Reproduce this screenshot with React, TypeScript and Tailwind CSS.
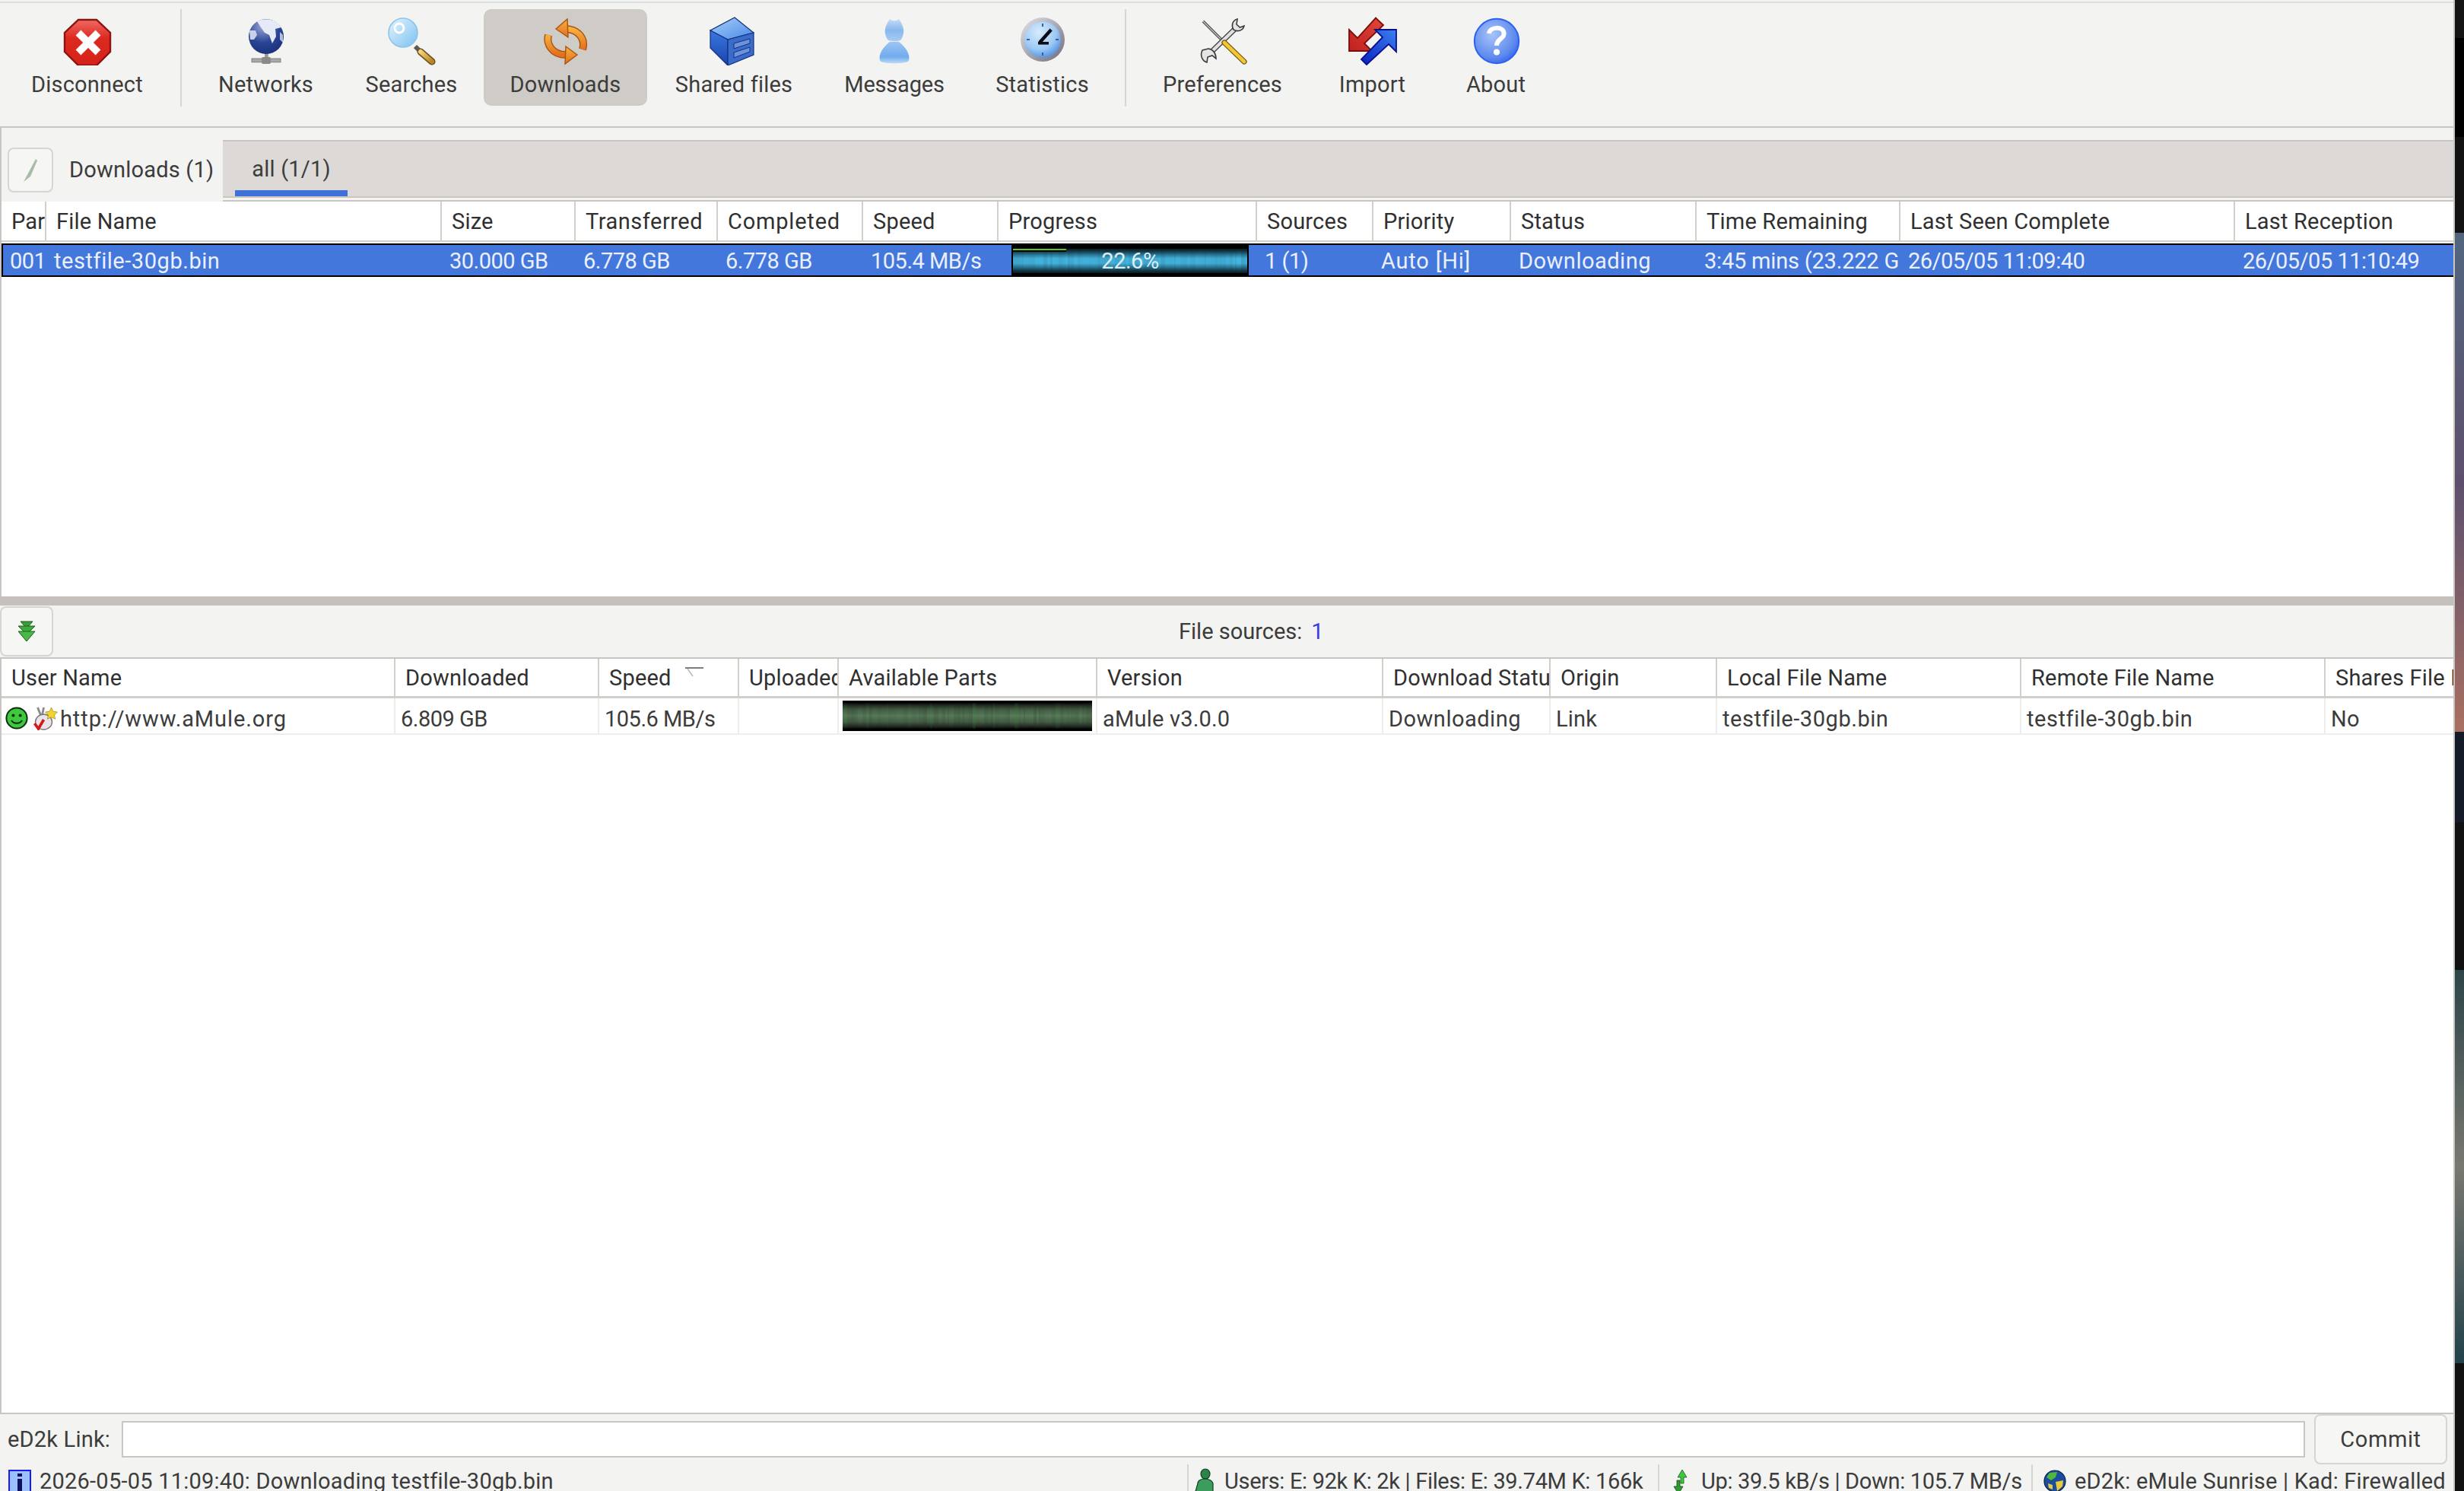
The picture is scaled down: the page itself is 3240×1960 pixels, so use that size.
import React from "react";

const stripes = (n: number, seed: number, scale: number) => {
  const out: { x: number; w: number; o: number }[] = [];
  let s = seed;
  let x = 0;
  for (let i = 0; i < n; i++) {
    s = (s * 9301 + 49297) % 233280;
    const w = 2 + (s % 5);
    s = (s * 9301 + 49297) % 233280;
    out.push({ x, w, o: ((s % 100) / 100) * scale });
    x += w;
  }
  return out;
};

const DisconnectIcon = () => (
  <svg width="64" height="64" viewBox="0 0 32 32">
    <defs>
      <linearGradient id="dc" x1="0" y1="0" x2="0" y2="1">
        <stop offset="0" stopColor="#ef6a62" />
        <stop offset="0.4" stopColor="#dd2a20" />
        <stop offset="1" stopColor="#d5231a" />
      </linearGradient>
    </defs>
    <polygon points="10,2 22,2 31,10.5 31,23 22,32 10,32 1,23 1,10.5" fill="url(#dc)" stroke="#8a1410" strokeWidth="1.2" />
    <path d="M10 10.5 L23 23.5 M23 10.5 L10 23.5" stroke="#fff" strokeWidth="4.8" />
  </svg>
);

const GlobeIcon = () => (
  <svg width="64" height="64" viewBox="0 0 32 32">
    <defs>
      <radialGradient id="gl" cx="0.4" cy="0.2" r="0.95">
        <stop offset="0" stopColor="#9aa8d8" />
        <stop offset="0.5" stopColor="#2a4596" />
        <stop offset="1" stopColor="#142a70" />
      </radialGradient>
    </defs>
    <rect x="15" y="24" width="2.4" height="5" fill="#9a9a9a" />
    <rect x="6.5" y="27.5" width="19" height="2.4" fill="#a8a8a8" stroke="#707070" strokeWidth="0.4" />
    <rect x="13" y="26.5" width="6" height="4.5" rx="1" fill="#8a8a8a" />
    <circle cx="16" cy="13" r="11.5" fill="url(#gl)" />
    <path d="M10 3 C14 1 21 1.4 24 4.5 L26 7 L22 8 L22.5 13 L20 17.5 L18 12 L15 10.5 L12.5 7 Z" fill="#e6e9f6" />
    <path d="M5 9 L9 9 L10 12 L8 15 L5.5 15 Z" fill="#c8d0ea" />
    <path d="M25 10 L27 12 L27 17 L25 15 Z" fill="#b4bede" />
  </svg>
);

const SearchIcon = () => (
  <svg width="64" height="64" viewBox="0 0 32 32">
    <defs>
      <linearGradient id="ln" x1="0" y1="0" x2="1" y2="1">
        <stop offset="0" stopColor="#e4f4fe" />
        <stop offset="1" stopColor="#7cc0f0" />
      </linearGradient>
      <linearGradient id="hd" x1="0" y1="0" x2="1" y2="1">
        <stop offset="0" stopColor="#f4d27a" />
        <stop offset="1" stopColor="#b88420" />
      </linearGradient>
    </defs>
    <path d="M18.5 19.5 L21 22" stroke="#5a5a5a" strokeWidth="3" />
    <path d="M22 23 L29.5 29.5" stroke="#6a5424" strokeWidth="4.6" strokeLinecap="round" />
    <path d="M22 23 L29.5 29.5" stroke="url(#hd)" strokeWidth="3" strokeLinecap="round" />
    <circle cx="10.5" cy="10.5" r="9.5" fill="url(#ln)" stroke="#8cc4e8" strokeWidth="0.8" />
    <circle cx="8" cy="7.5" r="3" fill="none" stroke="#ffffff" strokeWidth="1.4" />
  </svg>
);

const DownloadsIcon = () => (
  <svg width="64" height="64" viewBox="0 0 32 32">
    <defs>
      <linearGradient id="or" x1="0" y1="0" x2="0" y2="1">
        <stop offset="0" stopColor="#f8b040" />
        <stop offset="1" stopColor="#e2701c" />
      </linearGradient>
    </defs>
    <path d="M27 21.5 C29 15 25 8.5 16 8" fill="none" stroke="#a85210" strokeWidth="5" />
    <path d="M27 21.5 C29 15 25 8.5 16 8" fill="none" stroke="url(#or)" strokeWidth="3.6" />
    <polygon points="9.5,8 17,1.5 17.5,13.5" fill="url(#or)" stroke="#a85210" strokeWidth="0.7" />
    <path d="M4.5 12 C3 18 7 25 16 25" fill="none" stroke="#a85210" strokeWidth="5" />
    <path d="M4.5 12 C3 18 7 25 16 25" fill="none" stroke="url(#or)" strokeWidth="3.6" />
    <polygon points="23.5,25 16,19.5 15.5,31" fill="url(#or)" stroke="#a85210" strokeWidth="0.7" />
  </svg>
);

const SharedIcon = () => (
  <svg width="64" height="64" viewBox="0 0 32 32">
    <defs>
      <linearGradient id="sh" x1="0" y1="0" x2="1" y2="1">
        <stop offset="0" stopColor="#a8d0f8" />
        <stop offset="1" stopColor="#4a88e8" />
      </linearGradient>
      <linearGradient id="sl" x1="0" y1="0" x2="0" y2="1">
        <stop offset="0" stopColor="#3a78e0" />
        <stop offset="1" stopColor="#1a42b0" />
      </linearGradient>
    </defs>
    <polygon points="16.5,0.5 29,10.5 12,15 0.5,9" fill="url(#sh)" stroke="#14307c" strokeWidth="0.6" />
    <polygon points="0.5,9 12,15 12,32 0.5,20.5" fill="url(#sl)" stroke="#14307c" strokeWidth="0.6" />
    <polygon points="12,15 29,10.5 29,25 12,32" fill="#3a6ccc" stroke="#14307c" strokeWidth="0.6" />
    <polygon points="16,17.5 26.5,14.5 26.5,17.5 16,21" fill="#6e92da" stroke="#14307c" strokeWidth="0.5" />
    <polygon points="16,23.5 26.5,20 26.5,23 16,27" fill="#6e92da" stroke="#14307c" strokeWidth="0.5" />
  </svg>
);

const MessagesIcon = () => (
  <svg width="64" height="64" viewBox="0 0 32 32">
    <defs>
      <linearGradient id="mh" x1="0" y1="0" x2="0" y2="1">
        <stop offset="0" stopColor="#c4dcf6" />
        <stop offset="0.5" stopColor="#88b8ee" />
        <stop offset="1" stopColor="#a8ccf2" />
      </linearGradient>
      <linearGradient id="mb" x1="0" y1="0" x2="0" y2="1">
        <stop offset="0" stopColor="#9cc4f2" />
        <stop offset="0.7" stopColor="#70acee" />
        <stop offset="1" stopColor="#bcdaf8" />
      </linearGradient>
    </defs>
    <path d="M13 1.5 C14.5 3 17.5 3 19 1.5 C22 6 23.5 10 20.5 15 C19.5 16.5 12.5 16.5 11.5 15 C8.5 10 10 6 13 1.5 Z" fill="url(#mh)" />
    <path d="M13 16.5 L19 16.5 C25 21 27 27 25 29.5 C21 31 11 31 7 29.5 C5 27 7 21 13 16.5 Z" fill="url(#mb)" />
  </svg>
);

const ClockIcon = () => (
  <svg width="64" height="64" viewBox="0 0 32 32">
    <defs>
      <radialGradient id="cf" cx="0.4" cy="0.3" r="0.8">
        <stop offset="0" stopColor="#d8ecfc" />
        <stop offset="0.6" stopColor="#9cc8f4" />
        <stop offset="1" stopColor="#3c86e0" />
      </radialGradient>
      <linearGradient id="cr" x1="0" y1="0" x2="1" y2="1">
        <stop offset="0" stopColor="#e4e4ea" />
        <stop offset="1" stopColor="#6c6c7c" />
      </linearGradient>
    </defs>
    <circle cx="16" cy="15" r="14.5" fill="url(#cr)" />
    <circle cx="16" cy="15" r="11.8" fill="url(#cf)" />
    <path d="M16 4.5 V6.5 M16 23.5 V25.5 M5.5 15 H7.5 M24.5 15 H26.5" stroke="#3c5ca0" strokeWidth="1" />
    <path d="M14 17 L21.6 8.5" stroke="#0c0c14" strokeWidth="2.2" />
    <path d="M13 17.4 H20" stroke="#0c0c14" strokeWidth="1.8" />
  </svg>
);

const PrefsIcon = () => (
  <svg width="64" height="64" viewBox="0 0 32 32">
    <path d="M3 3 L16 16" stroke="#3c3c3c" strokeWidth="1.8" />
    <path d="M3 3 L16 16" stroke="#c8c8c8" strokeWidth="0.7" />
    <path d="M24.5 7.5 L7.5 24" stroke="#3c3c3c" strokeWidth="3.4" />
    <path d="M24.5 7.5 L7.5 24" stroke="#e0e0e0" strokeWidth="2.2" />
    <path d="M25.5 1.5 C22 2.5 21.5 6 23 8.5 C25.5 10 29 9.5 30 6 L27.2 7 L25 5 Z" fill="#e4e4e4" stroke="#3c3c3c" strokeWidth="0.8" />
    <path d="M2.5 22 C1 25 2 29 5.5 30 L6 26.5 L9 25.5 L11.5 27.5 C11.5 24 9.5 21.5 6.5 21 Z" fill="#e4e4e4" stroke="#3c3c3c" strokeWidth="0.8" />
    <path d="M17 17 L30 29.5" stroke="#6c5414" strokeWidth="3.6" strokeLinecap="round" />
    <path d="M17 17 L30 29.5" stroke="#f4c630" strokeWidth="2.4" strokeLinecap="round" />
  </svg>
);

const ImportIcon = () => (
  <svg width="64" height="64" viewBox="0 0 32 32">
    <defs>
      <linearGradient id="ir" x1="1" y1="0" x2="0" y2="1">
        <stop offset="0" stopColor="#e04838" />
        <stop offset="1" stopColor="#c02020" />
      </linearGradient>
      <linearGradient id="ib" x1="1" y1="0" x2="0" y2="1">
        <stop offset="0" stopColor="#3c80f0" />
        <stop offset="1" stopColor="#0820c0" />
      </linearGradient>
    </defs>
    <polygon points="0.5,22.5 0.5,8.5 6,14 18,0.8 23,5.5 10.5,17.5 15.5,22.5" fill="url(#ir)" stroke="#7c0c0c" strokeWidth="0.9" />
    <polygon points="31.5,8.5 31.5,23 26.5,18 12,31.5 8.5,28 22.5,13.5 17.5,8.5" fill="url(#ib)" stroke="#08108c" strokeWidth="0.9" />
  </svg>
);

const AboutIcon = () => (
  <svg width="64" height="64" viewBox="0 0 32 32">
    <defs>
      <radialGradient id="ab" cx="0.4" cy="0.35" r="0.75">
        <stop offset="0" stopColor="#a8c4f8" />
        <stop offset="0.7" stopColor="#5e8aec" />
        <stop offset="1" stopColor="#2a5cf0" />
      </radialGradient>
    </defs>
    <circle cx="16.5" cy="16" r="14.6" fill="url(#ab)" stroke="#2c60f4" strokeWidth="1" />
    <path d="M11.5 11 C12 6.5 21 6 21.3 11 C21.5 14.5 16.5 14.5 16.5 19" fill="none" stroke="#fff" strokeWidth="3" />
    <circle cx="16.5" cy="23.3" r="2" fill="#fff" />
  </svg>
);

const Smiley = () => (
  <svg width="30" height="30" viewBox="0 0 15 15" className="shrink-0 mt-[6px]">
    <circle cx="7.5" cy="7.5" r="6.8" fill="#3ec83e" stroke="#0c2c0c" strokeWidth="1" />
    <circle cx="5.2" cy="5.8" r="1" fill="#0c2c0c" />
    <circle cx="9.8" cy="5.8" r="1" fill="#0c2c0c" />
    <path d="M4 9 C5.5 11.5 9.5 11.5 11 9" fill="none" stroke="#0c2c0c" strokeWidth="1" />
  </svg>
);

const MuleBadge = () => (
  <svg width="33" height="32" viewBox="0 0 16 16" className="shrink-0 ml-[6px] mt-[6px]">
    <path d="M3 1 L5 6 M7 1 L6 6" stroke="#8a8a8a" strokeWidth="1.4" />
    <ellipse cx="7" cy="10.5" rx="5.5" ry="5" fill="#e8e4e8" stroke="#7a7478" strokeWidth="0.7" />
    <polygon points="12,1 13.2,3.6 16,4 14,6 14.6,8.6 12,7.4 9.4,8.6 10,6 8,4 10.8,3.6" fill="#f4d428" stroke="#8a7410" strokeWidth="0.3" />
    <path d="M1 11.5 L3.5 15 L7 9" fill="none" stroke="#d41818" strokeWidth="1.8" />
  </svg>
);

const TripleDown = () => (
  <svg width="30" height="28" viewBox="0 0 15 14">
    <path d="M3.5 0.5 H11.5 L7.5 5 Z" fill="#3c9c3c" stroke="#1c5c1c" strokeWidth="0.5" />
    <path d="M2 3.5 H13 L7.5 9 Z" fill="#3cac3c" stroke="#1c5c1c" strokeWidth="0.5" />
    <path d="M2 7 H13 L7.5 13.5 Z" fill="#48b848" stroke="#1c5c1c" strokeWidth="0.5" />
  </svg>
);

const InfoIcon = () => (
  <svg width="30" height="30" viewBox="0 0 15 15" className="shrink-0">
    <rect x="0.5" y="0.5" width="14" height="14" fill="#9cc0fc" stroke="#1c1cf0" strokeWidth="1" />
    <rect x="6" y="2.5" width="3" height="2" fill="#101060" />
    <rect x="6" y="6" width="3" height="8" fill="#101060" />
  </svg>
);

const UsersIcon = () => (
  <svg width="30" height="34" viewBox="0 0 15 17" className="shrink-0">
    <ellipse cx="8" cy="3.8" rx="3" ry="3.3" fill="#2c8448" stroke="#143c20" strokeWidth="0.6" />
    <path d="M3 10 C3 6 12 6 13 10 L13 17 H1 Z" fill="#3c9c5c" stroke="#143c20" strokeWidth="0.6" />
  </svg>
);

const UpDownIcon = () => (
  <svg width="20" height="34" viewBox="0 0 10 17" className="shrink-0">
    <path d="M6 1 L9 6 H7 V10 H5 V6 H3 Z" fill="#3cc83c" stroke="#1c5c1c" strokeWidth="0.4" />
    <path d="M3.5 17 L0.5 12 H2.5 V8 H4.5 V12 H6.5 Z" fill="#2c9c2c" stroke="#1c3c1c" strokeWidth="0.4" />
  </svg>
);

const NetIcon = () => (
  <svg width="30" height="34" viewBox="0 0 15 17" className="shrink-0">
    <circle cx="7.5" cy="8.5" r="7" fill="#1c4c9c" stroke="#0c1c4c" strokeWidth="0.6" />
    <path d="M4 3 L9 2.5 L8 6 L5 8 L2 6 Z" fill="#4cb83c" />
    <path d="M8 9 L13 8 L12.5 12 L9 15 Z" fill="#e8c83c" />
    <path d="M3 10 L6 11 L6 14 L3.5 13 Z" fill="#e8c83c" />
  </svg>
);

const ProgressBar = () => (
  <div className="relative w-[312px] h-[43px] bg-black shrink-0">
    <svg width="308" height="32" viewBox="0 0 308 32" className="absolute left-[2px] top-[6px]">
      <defs>
        <linearGradient id="pg" x1="0" y1="0" x2="0" y2="1">
          <stop offset="0" stopColor="#0a1c24" />
          <stop offset="0.1" stopColor="#143844" />
          <stop offset="0.25" stopColor="#2c7c9c" />
          <stop offset="0.4" stopColor="#45b4de" />
          <stop offset="0.6" stopColor="#45b4de" />
          <stop offset="0.75" stopColor="#2c7c9c" />
          <stop offset="0.9" stopColor="#143844" />
          <stop offset="1" stopColor="#0a1c24" />
        </linearGradient>
      </defs>
      <rect width="308" height="32" fill="url(#pg)" />
      {stripes(90, 11, 0.12).map((s, i) => (
        <rect key={i} x={s.x} y="0" width={s.w} height="32" fill="#06222e" opacity={s.o} />
      ))}
      <rect width="70" height="4" fill="#000" />
      <rect width="70" height="2" fill="#58c82c" />
    </svg>
    <span className="absolute inset-0 flex items-center justify-center text-[#dcecf4] tracking-[-0.5px]">22.6%</span>
  </div>
);

const PartsBar = () => (
  <svg width="328" height="40" viewBox="0 0 328 40" className="shrink-0">
    <defs>
      <linearGradient id="pa" x1="0" y1="0" x2="0" y2="1">
        <stop offset="0" stopColor="#000" />
        <stop offset="0.07" stopColor="#000" />
        <stop offset="0.15" stopColor="#222a22" />
        <stop offset="0.3" stopColor="#445f46" />
        <stop offset="0.5" stopColor="#5a7a5a" />
        <stop offset="0.7" stopColor="#445f46" />
        <stop offset="0.85" stopColor="#222a22" />
        <stop offset="0.93" stopColor="#000" />
        <stop offset="1" stopColor="#000" />
      </linearGradient>
    </defs>
    <rect width="328" height="40" fill="url(#pa)" />
    {stripes(90, 37, 0.18).map((s, i) => (
      <rect key={i} x={s.x} y="3" width={s.w} height="34" fill={i % 7 === 0 ? "#2c8c2c" : "#1a2a1a"} opacity={s.o} />
    ))}
  </svg>
);

const tools = [
  { label: "Disconnect", w: "w-[213px]", icon: <DisconnectIcon /> },
  { sep: "ml-[14px] mr-[12px]" },
  { label: "Networks", w: "w-[193px]", icon: <GlobeIcon /> },
  { label: "Searches", w: "w-[186px]", icon: <SearchIcon /> },
  { label: "Downloads", w: "w-[215px]", icon: <DownloadsIcon />, active: true },
  { label: "Shared files", w: "w-[224px]", icon: <SharedIcon /> },
  { label: "Messages", w: "w-[194px]", c: "tracking-[-0.2px]", icon: <MessagesIcon /> },
  { label: "Statistics", w: "w-[191px]", icon: <ClockIcon /> },
  { sep: "ml-[11px] mr-[11px]" },
  { label: "Preferences", w: "w-[227px]", icon: <PrefsIcon /> },
  { label: "Import", w: "w-[163px]", icon: <ImportIcon /> },
  { label: "About", w: "w-[158px]", icon: <AboutIcon /> },
];

const topCols = [
  { t: "Par", w: "w-[59px]" },
  { t: "File Name", w: "w-[520px]" },
  { t: "Size", w: "w-[176px]" },
  { t: "Transferred", w: "w-[187px]", c: "tracking-[0.5px]" },
  { t: "Completed", w: "w-[191px]", c: "tracking-[0.8px]" },
  { t: "Speed", w: "w-[178px]" },
  { t: "Progress", w: "w-[340px]" },
  { t: "Sources", w: "w-[153px]" },
  { t: "Priority", w: "w-[181px]" },
  { t: "Status", w: "w-[244px]" },
  { t: "Time Remaining", w: "w-[268px]" },
  { t: "Last Seen Complete", w: "w-[440px]" },
  { t: "Last Reception", w: "flex-1" },
];

const topRow = [
  { t: "001", w: "w-[57px]", c: "pl-[9px] tracking-[-0.5px]" },
  { t: "testfile-30gb.bin", w: "w-[520px]", c: "pl-[10px] tracking-[0.55px]" },
  { t: "30.000 GB", w: "w-[176px]", c: "pl-[10px] tracking-[-0.5px]" },
  { t: "6.778 GB", w: "w-[187px]", c: "pl-[10px] tracking-[-0.5px]" },
  { t: "6.778 GB", w: "w-[191px]", c: "pl-[10px] tracking-[-0.5px]" },
  { t: "105.4 MB/s", w: "w-[178px]", c: "pl-[10px] tracking-[-0.5px]" },
  { t: "", w: "w-[340px]", c: "pl-[17px]", bar: true },
  { t: "1 (1)", w: "w-[153px]", c: "pl-[10px] tracking-[-0.5px]" },
  { t: "Auto [Hi]", w: "w-[181px]", c: "pl-[10px] tracking-[0.8px]" },
  { t: "Downloading", w: "w-[244px]", c: "pl-[10px] tracking-[0.5px]" },
  { t: "3:45 mins (23.222 G", w: "w-[268px]", c: "pl-[10px] tracking-[-0.2px]" },
  { t: "26/05/05 11:09:40", w: "w-[440px]", c: "pl-[10px] tracking-[-0.5px]" },
  { t: "26/05/05 11:10:49", w: "flex-1", c: "pl-[10px] tracking-[-0.5px]" },
];

const botCols = [
  { t: "User Name", w: "w-[518px]" },
  { t: "Downloaded", w: "w-[268px]" },
  { t: "Speed", w: "w-[184px]", sort: true },
  { t: "Uploaded", w: "w-[131px]" },
  { t: "Available Parts", w: "w-[340px]" },
  { t: "Version", w: "w-[376px]" },
  { t: "Download Status", w: "w-[220px]" },
  { t: "Origin", w: "w-[219px]" },
  { t: "Local File Name", w: "w-[400px]" },
  { t: "Remote File Name", w: "w-[400px]" },
  { t: "Shares File List", w: "flex-1" },
];

const botRow: { t: string; w: string; kind?: string; c?: string }[] = [
  { t: "http://www.aMule.org", w: "w-[518px]", kind: "user", c: "tracking-[0.9px]" },
  { t: "6.809 GB", w: "w-[268px]", c: "tracking-[-0.5px]" },
  { t: "105.6 MB/s", w: "w-[184px]", c: "tracking-[-0.5px]" },
  { t: "", w: "w-[131px]" },
  { t: "", w: "w-[340px]", kind: "parts" },
  { t: "aMule v3.0.0", w: "w-[376px]" },
  { t: "Downloading", w: "w-[220px]", c: "tracking-[0.5px]" },
  { t: "Link", w: "w-[219px]" },
  { t: "testfile-30gb.bin", w: "w-[400px]", c: "tracking-[0.55px]" },
  { t: "testfile-30gb.bin", w: "w-[400px]", c: "tracking-[0.55px]" },
  { t: "No", w: "flex-1" },
];

export default function App() {
  return (
    <div className="flex w-[3240px] h-[1960px] overflow-hidden font-['Roboto',sans-serif] text-[29px] leading-[36px] tracking-[0.2px] text-[#3c3c3c] whitespace-nowrap">
      <div className="flex flex-col w-[3228px] h-full bg-[#f3f3f1] border-r-2 border-[#c9c5c0]">
        <div className="h-[4px] shrink-0 border-b-2 border-[#dcdcdc]" />

        <div className="h-[164px] shrink-0 flex gap-[2px] pl-[8px] pt-[8px] border-b-2 border-[#c9c5c0]">
          {tools.map((it, i) =>
            it.sep ? (
              <div key={i} className={`w-[2px] h-[128px] ${it.sep} bg-[#d8d6d2]`} />
            ) : (
              <div
                key={i}
                className={`${it.w} h-[127px] flex flex-col items-center pt-[10px] rounded-[10px] ${
                  it.active ? "bg-[#cfcbc6]" : ""
                }`}
              >
                <div className="w-[64px] h-[64px]">{it.icon}</div>
                <div className={`mt-[7px] ${it.c ?? ""}`}>{it.label}</div>
              </div>
            )
          )}
        </div>

        <div className="h-[97px] shrink-0 flex border-l-2 border-[#c9c5c0]">
          <div className="w-[291px] shrink-0 flex items-start pl-[8px] pt-[26px] gap-[21px]">
            <div className="w-[60px] h-[59px] rounded-[8px] border-2 border-[#d8d5d1] bg-[#f6f6f4] flex items-center justify-center">
              <svg width="20" height="32" viewBox="0 0 20 32">
                <path d="M1 31 L17 1 L19 3 L10 24 Z" fill="#a9bca8" />
              </svg>
            </div>
            <div className="pt-[11px]">Downloads (1)</div>
          </div>
          <div className="flex-1 flex flex-col mt-[16px]">
            <div className="h-[76px] bg-[#dcd9d6] border-t-2 border-b-2 border-[#c9c5c0] pl-[16px]">
              <div className="w-[148px] h-[72px] flex justify-center pt-[18px] border-b-8 border-[#3f72d8]">all (1/1)</div>
            </div>
            <div className="flex-1 bg-[#f3f3f1] border-b-2 border-[#c9c5c0]" />
          </div>
        </div>

        <div className="h-[519px] shrink-0 flex flex-col bg-white border-l-2 border-[#c9c5c0]">
          <div className="h-[53px] shrink-0 flex border-b-2 border-[#d3d0cc] text-[#303030]">
            {topCols.map((c, i) => (
              <div key={i} className={`${c.w} ${c.c ?? ""} shrink-0 overflow-hidden pl-[13px] flex items-center border-r-2 border-[#d3d0cc] last:border-r-0`}>
                {c.t}
              </div>
            ))}
          </div>
          <div className="h-[44px] mt-[2px] shrink-0 flex bg-[#4477dc] border-y-2 border-l-2 border-black text-[#eaf0fb]">
            {topRow.map((c, i) => (
              <div key={i} className={`${c.w} shrink-0 overflow-hidden ${c.c} flex items-center pt-[1px]`}>
                {c.bar ? <ProgressBar /> : c.t}
              </div>
            ))}
          </div>
        </div>

        <div className="h-[12px] shrink-0 bg-[#c5c0bb]" />

        <div className="h-[70px] shrink-0 flex items-center border-b-2 border-[#c9c5c0]">
          <div className="w-[70px] h-[66px] shrink-0 rounded-[8px] border-2 border-[#d8d5d1] bg-[#f6f6f4] flex items-center justify-center">
            <TripleDown />
          </div>
          <div className="ml-[1480px] flex gap-[12px] tracking-[0px]">
            <span>File sources:</span>
            <span className="text-[#3c3ce0]">1</span>
          </div>
        </div>

        <div className="flex-1 min-h-0 flex flex-col bg-white border-l-2 border-[#c9c5c0]">
          <div className="h-[52px] shrink-0 flex border-b-[3px] border-[#d3d0cc] text-[#303030]">
            {botCols.map((c, i) => (
              <div key={i} className={`${c.w} shrink-0 overflow-hidden pl-[13px] flex items-center border-r-2 border-[#d3d0cc] last:border-r-0 gap-[18px]`}>
                <span>{c.t}</span>
                {c.sort && (
                  <svg width="24" height="14" viewBox="0 0 24 14" className="shrink-0 -mt-[14px]">
                    <path d="M0 1 H24" stroke="#7c7c7c" strokeWidth="2" />
                    <path d="M3 2 L10 12" stroke="#b8b8b8" strokeWidth="1.5" />
                  </svg>
                )}
              </div>
            ))}
          </div>
          <div className="h-[48px] shrink-0 flex border-b-2 border-[#ededed]">
            {botRow.map((c, i) => (
              <div key={i} className={`${c.w} shrink-0 overflow-hidden flex items-center border-r-2 border-[#ededed] last:border-r-0 ${c.kind === "parts" ? "pl-[5px]" : c.kind === "user" ? "pl-[5px]" : "pl-[7px]"}`}>
                {c.kind === "user" && (
                  <>
                    <Smiley />
                    <MuleBadge />
                  </>
                )}
                {c.kind === "parts" ? <PartsBar /> : <span className={`mt-[8px] ${c.c ?? ""} ${c.kind === "user" ? "ml-[3px]" : ""}`}>{c.t}</span>}
              </div>
            ))}
          </div>
        </div>

        <div className="h-[68px] shrink-0 flex items-center border-t-2 border-[#c9c5c0] pl-[10px]">
          <span className="w-[150px] shrink-0">eD2k Link:</span>
          <div className="w-[2871px] h-[48px] shrink-0 bg-white border-2 border-[#c9c5c0]" />
          <div className="ml-[12px] w-[175px] h-[66px] shrink-0 rounded-[8px] border-2 border-[#d8d5d1] bg-[#f6f6f4] flex items-center justify-center tracking-[0.6px]">
            Commit
          </div>
        </div>

        <div className="h-[35px] shrink-0 flex items-center overflow-hidden">
          <div className="w-[1561px] shrink-0 flex items-center pl-[11px] gap-[11px] pt-[8px] tracking-[0.23px]">
            <InfoIcon />
            <span>2026-05-05 11:09:40: Downloading testfile-30gb.bin</span>
          </div>
          <div className="w-[619px] h-full shrink-0 flex items-center pl-[6px] gap-[11px] border-l-2 border-[#d8d5d1] pt-[8px] tracking-[-0.32px]">
            <UsersIcon />
            <span>Users: E: 92k K: 2k | Files: E: 39.74M K: 166k</span>
          </div>
          <div className="w-[491px] h-full shrink-0 flex items-center pl-[18px] gap-[17px] border-l-2 border-[#d8d5d1] pt-[8px] tracking-[-0.32px]">
            <UpDownIcon />
            <span>Up: 39.5 kB/s | Down: 105.7 MB/s</span>
          </div>
          <div className="flex-1 h-full flex items-center pl-[14px] gap-[11px] border-l-2 border-[#d8d5d1] pt-[8px] tracking-[0.22px]">
            <NetIcon />
            <span>eD2k: eMule Sunrise | Kad: Firewalled</span>
          </div>
        </div>
      </div>

      <div className="flex-1 flex flex-col bg-[#111111]">
        <div className="h-[50px] bg-[#141414]" />
        <div className="h-[130px] bg-black" />
        <div className="h-[126px] bg-[#121212]" />
        <div className="h-[656px] bg-gradient-to-b from-[#51657f] via-[#5d4f6c] to-[#a87060]" />
        <div className="h-[119px] bg-[#141a28]" />
        <div className="h-[194px] bg-[#111111]" />
        <div className="h-[517px] bg-gradient-to-b from-[#2c4448] via-[#787870] to-[#22414a]" />
      </div>
    </div>
  );
}
